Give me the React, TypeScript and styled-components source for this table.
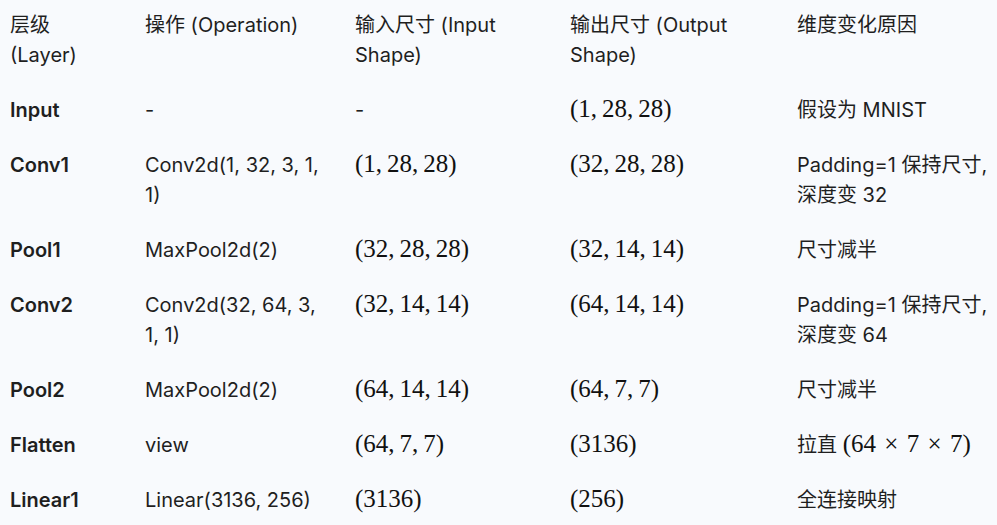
import React from 'react';
import styled, { createGlobalStyle } from 'styled-components';

const GlobalStyle = createGlobalStyle`
  html, body {
    margin: 0;
    padding: 0;
    background: #f8fafd;
  }
  body {
    font-family: Inter, "Noto Sans CJK SC", sans-serif;
    color: #1f1f1f;
  }
`;

const Table = styled.table`
  width: 997px;
  border-collapse: collapse;
  table-layout: fixed;
  font-size: 20px;
  line-height: 30px;
  color: #1f1f1f;
`;

const HeadCell = styled.th`
  text-align: left;
  font-weight: 400;
  vertical-align: top;
  padding: 10px 10px 13px 10px;
`;

const Cell = styled.td<{ $strong?: boolean }>`
  vertical-align: top;
  padding: 12px 10px 13px 10px;
  font-weight: ${(p) => (p.$strong ? 600 : 400)};
`;

const Line = styled.div`
  white-space: nowrap;
`;

const Math = styled.span`
  font-family: "Liberation Serif", "DejaVu Serif", serif;
  font-size: 25px;
  line-height: 1;
  color: #111;
`;

type Content = string | { math: string; prefix?: string };

const cols = [135, 210, 215, 227, 210];

const headers: string[][] = [
  ['层级', '(Layer)'],
  ['操作 (Operation)'],
  ['输入尺寸 (Input', 'Shape)'],
  ['输出尺寸 (Output', 'Shape)'],
  ['维度变化原因'],
];

const m = (s: string): Content => ({ math: s.replace(/,/g, ',\u2009') });

const rows: { name: string; op: string[]; input: Content; output: Content; why: Content[] }[] = [
  { name: 'Input', op: ['-'], input: '-', output: m('(1,28,28)'), why: ['假设为 MNIST'] },
  { name: 'Conv1', op: ['Conv2d(1, 32, 3, 1,', '1)'], input: m('(1,28,28)'), output: m('(32,28,28)'), why: ['Padding=1 保持尺寸,', '深度变 32'] },
  { name: 'Pool1', op: ['MaxPool2d(2)'], input: m('(32,28,28)'), output: m('(32,14,14)'), why: ['尺寸减半'] },
  { name: 'Conv2', op: ['Conv2d(32, 64, 3,', '1, 1)'], input: m('(32,14,14)'), output: m('(64,14,14)'), why: ['Padding=1 保持尺寸,', '深度变 64'] },
  { name: 'Pool2', op: ['MaxPool2d(2)'], input: m('(64,14,14)'), output: m('(64,7,7)'), why: ['尺寸减半'] },
  { name: 'Flatten', op: ['view'], input: m('(64,7,7)'), output: m('(3136)'), why: [{ prefix: '拉直 ', math: '(64\u2004×\u20047\u2004×\u20047)' }] },
  { name: 'Linear1', op: ['Linear(3136, 256)'], input: m('(3136)'), output: m('(256)'), why: ['全连接映射'] },
];

function Render({ c }: { c: Content }) {
  if (typeof c === 'string') return <>{c}</>;
  return (
    <>
      {c.prefix}
      <Math>{c.math}</Math>
    </>
  );
}

export default function App() {
  return (
    <>
      <GlobalStyle />
      <Table>
        <colgroup>
          {cols.map((w, i) => (
            <col key={i} style={{ width: w }} />
          ))}
        </colgroup>
        <thead>
          <tr>
            {headers.map((h, i) => (
              <HeadCell key={i}>
                {h.map((l) => (
                  <Line key={l}>{l}</Line>
                ))}
              </HeadCell>
            ))}
          </tr>
        </thead>
        <tbody>
          {rows.map((r) => (
            <tr key={r.name}>
              <Cell $strong>{r.name}</Cell>
              <Cell>
                {r.op.map((l) => (
                  <Line key={l}>{l}</Line>
                ))}
              </Cell>
              <Cell>
                <Render c={r.input} />
              </Cell>
              <Cell>
                <Render c={r.output} />
              </Cell>
              <Cell>
                {r.why.map((l, i) => (
                  <Line key={i}>
                    <Render c={l} />
                  </Line>
                ))}
              </Cell>
            </tr>
          ))}
        </tbody>
      </Table>
    </>
  );
}
